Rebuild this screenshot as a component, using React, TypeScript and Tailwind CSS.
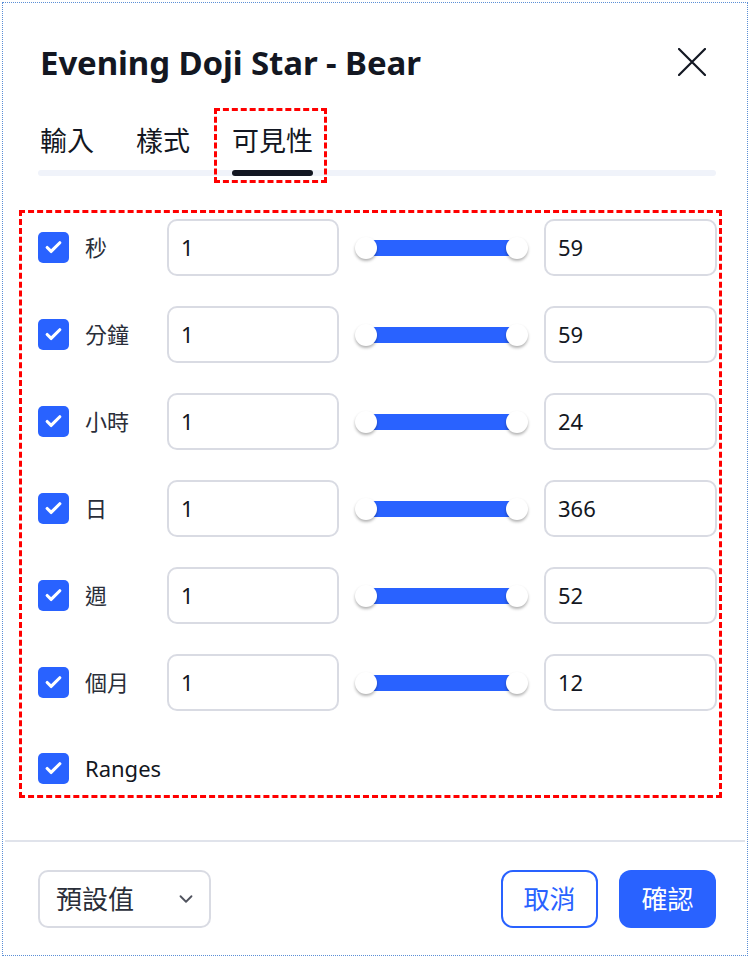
import { Check, ChevronDown } from "lucide-react";

const rows = [
  { label: "秒", max: "59" },
  { label: "分鐘", max: "59" },
  { label: "小時", max: "24" },
  { label: "日", max: "366" },
  { label: "週", max: "52" },
  { label: "個月", max: "12" },
];

function Box() {
  return (
    <span className="flex h-[31px] w-[31px] shrink-0 items-center justify-center rounded-[5px] bg-[#2962ff]">
      <Check className="h-[19px] w-[19px] text-white" strokeWidth={4} />
    </span>
  );
}

function Field({ value, w }: { value: string; w: string }) {
  return (
    <div className={`flex h-[57px] ${w} shrink-0 items-center rounded-[10px] border-2 border-[#d9dbe3] pl-[12px] text-[22px] text-[#131722]`}>
      {value}
    </div>
  );
}

function Range() {
  return (
    <div className="relative mx-[16px] flex h-[57px] w-[173px] shrink-0 items-center">
      <div className="mx-[5px] h-[16px] w-full bg-[#2962ff]" />
      {/* knobs */}
      <span className="absolute left-0 top-1/2 h-[22px] w-[22px] -translate-y-1/2 rounded-full bg-white shadow-[0_2px_3px_rgba(0,0,0,0.3)]" />
      <span className="absolute right-0 top-1/2 h-[22px] w-[22px] -translate-y-1/2 rounded-full bg-white shadow-[0_2px_3px_rgba(0,0,0,0.3)]" />
    </div>
  );
}

export default function App() {
  return (
    <div className="relative h-[958px] w-[750px] overflow-hidden bg-white font-['Noto_Sans','Noto_Sans_CJK_TC',sans-serif] text-[#131722]">
      {/* dotted frame */}
      <div className="pointer-events-none absolute inset-[2px] border border-dotted border-[#5b8fd6]" />

      {/* Header */}
      <div className="mt-[39px] flex h-[46px] items-center justify-between pl-[40px] pr-[44px]">
        <h1 className="text-[33px] font-bold leading-none tracking-[-0.1px]">Evening Doji Star - Bear</h1>
        <svg width="28" height="28" viewBox="0 0 28 28" className="text-[#131722]">
          <path d="M1 1L27 27M27 1L1 27" stroke="currentColor" strokeWidth="2.2" strokeLinecap="round" />
        </svg>
      </div>

      {/* Tabs */}
      <div className="relative ml-[38px] mr-[34px] mt-[38px]">
        <div className="absolute inset-x-0 bottom-0 h-[6px] rounded-full bg-[#f0f3fa]" />
        <div className="relative flex gap-[42px] pl-[2px]">
          {["輸入", "樣式", "可見性"].map((t, i) => (
            <div key={t} className="relative flex flex-col">
              <span className="h-[36px] text-[27px] leading-[36px] text-[#131722]">{t}</span>
              <span className={`mt-[11px] h-[6px] rounded-full ${i === 2 ? "bg-[#131722]" : "bg-transparent"}`} />
              {i === 2 && (
                <span className="pointer-events-none absolute -bottom-[7px] -left-[18px] -right-[14px] -top-[15px] border-[3px] border-dashed border-[#ff0000]" />
              )}
            </div>
          ))}
        </div>
      </div>

      {/* Visibility rows */}
      <div className="ml-[19px] mt-[34px] flex w-[703px] flex-col gap-[30px] border-[3px] border-dashed border-[#ff0000] pl-[16px] pt-[6px]">
        {rows.map((r) => (
          <div key={r.label} className="flex h-[57px] items-center">
            <div className="flex w-[129px] shrink-0 items-center gap-[16px]">
              <Box />
              <span className="text-[22px] text-[#2a2e39]">{r.label}</span>
            </div>
            <Field value="1" w="w-[172px]" />
            <Range />
            <Field value={r.max} w="w-[173px]" />
          </div>
        ))}
        <div className="flex h-[54px] items-center gap-[16px]">
          <Box />
          <span className="text-[22px] text-[#131722]">Ranges</span>
        </div>
      </div>

      {/* Footer */}
      <div className="mx-[5px] mt-[42px] h-[2px] bg-[#e0e3eb]" />
      <div className="mt-[28px] flex items-center justify-between pl-[38px] pr-[34px]">
        <div className="flex h-[58px] w-[173px] items-center justify-between rounded-[10px] border-2 border-[#d9dbe3] pl-[16px] pr-[12px]">
          <span className="text-[26px] leading-none text-[#2a2e39]">預設值</span>
          <ChevronDown className="h-[22px] w-[22px] text-[#50535e]" strokeWidth={2} />
        </div>
        <div className="flex gap-[21px]">
          <button className="flex h-[58px] w-[97px] items-center justify-center rounded-[12px] border-2 border-[#2962ff] text-[26px] text-[#2962ff]">
            取消
          </button>
          <button className="flex h-[58px] w-[97px] items-center justify-center rounded-[12px] bg-[#2962ff] text-[26px] text-white">
            確認
          </button>
        </div>
      </div>
    </div>
  );
}
